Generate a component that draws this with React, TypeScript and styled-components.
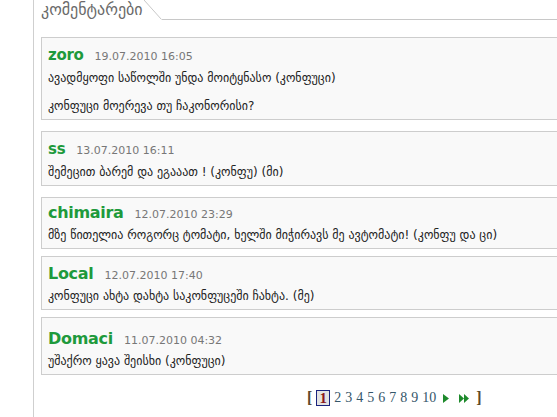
import * as React from 'react'
import styled, {createGlobalStyle} from 'styled-components'

const Global = createGlobalStyle`
  html, body {
    margin: 0;
    padding: 0;
    background: #fff;
    overflow: hidden;
  }
`

const Page = styled.div`
  margin-left: 33px;
  width: 620px;
  min-height: 417px;
  border-left: 1px solid #cfcfcf;
  font-family: Verdana, 'DejaVu Sans', sans-serif;
`

const TabRow = styled.div`
  display: flex;
  align-items: flex-end;
  height: 20px;
`

const TabTitle = styled.h2`
  margin: 0;
  padding: 0 0 0 7px;
  font-family: 'DejaVu Sans', sans-serif;
  font-size: 16px;
  font-weight: normal;
  line-height: 20px;
  color: #6a6a6a;
  height: 20px;
`

const TabCorner = styled.svg`
  display: block;
  width: 18px;
  height: 20px;
  margin-left: 1px;
`

const TabRule = styled.div`
  flex: 1;
  border-bottom: 1px solid #c8c8c8;
`

const List = styled.div`
  padding: 17px 0 0 7px;
`

const Card = styled.div<{$gap: number; $pad: number}>`
  margin-top: ${p => p.$gap}px;
  background: #f9f9f9;
  border: 1px solid #cdcdcd;
  border-right: none;
  padding: ${p => p.$pad}px 7px 5px 6px;
`

const Head = styled.div`
  display: flex;
  align-items: baseline;
  gap: 11px;
  height: 18px;
`

const Author = styled.span<{$size: number}>`
  font-family: Tahoma, 'DejaVu Sans', sans-serif;
  font-weight: bold;
  font-size: ${p => p.$size}px;
  color: #1e9a3c;
  letter-spacing: -0.3px;
`

const Date = styled.span`
  font-family: Verdana, 'DejaVu Sans', sans-serif;
  font-size: 11px;
  color: #777;
`

const Text = styled.p`
  margin: 6px 0 0;
  font-family: 'DejaVu Sans', sans-serif;
  font-size: 12px;
  line-height: 16px;
  color: #222;
  & + & {
    margin-top: 12px;
  }
`

const Pager = styled.div`
  display: flex;
  align-items: center;
  gap: 4px;
  padding: 14px 0 0 273px;
  font-family: 'Liberation Serif', 'Times New Roman', serif;
  font-size: 14px;
  color: #35566a;
`

const Bracket = styled.span`
  color: #5c4a2a;
  font-weight: bold;
  font-size: 16px;
`

const Current = styled.span`
  display: inline-flex;
  align-items: center;
  justify-content: center;
  width: 12px;
  height: 14px;
  border: 1px solid #1a237e;
  background: #e2e2e2;
  color: #8b1a1a;
  font-weight: bold;
  font-size: 15px;
`

const PageLink = styled.span`
  cursor: pointer;
`

const Arrow = styled.svg`
  display: block;
  margin: 0 3px;
`

const comments = [
  {
    author: 'zoro',
    size: 15,
    date: '19.07.2010 16:05',
    gap: 0,
    pad: 8,
    lines: ['ავადმყოფი საწოლში უნდა მოიტყნასო (კონფუცი)', 'კონფუცი მოერევა თუ ჩაკონორისი?'],
  },
  {
    author: 'ss',
    size: 15,
    date: '13.07.2010 16:11',
    gap: 11,
    pad: 8,
    lines: ['შემეცით ბარემ და ეგააათ ! (კონფუ) (მი)'],
  },
  {
    author: 'chimaira',
    size: 16,
    date: '12.07.2010 23:29',
    gap: 11,
    pad: 5,
    lines: ['მზე წითელია როგორც ტომატი, ხელში მიჭირავს მე ავტომატი! (კონფუ და ცი)'],
  },
  {
    author: 'Local',
    size: 16,
    date: '12.07.2010 17:40',
    gap: 7,
    pad: 7,
    lines: ['კონფუცი ახტა დახტა საკონფუცეში ჩახტა. (მე)'],
  },
  {
    author: 'Domaci',
    size: 16,
    date: '11.07.2010 04:32',
    gap: 7,
    pad: 11,
    lines: ['უშაქრო ყავა შეისხი (კონფუცი)'],
  },
]

export default function App() {
  return (
    <>
      <Global />
      <Page>
        <TabRow>
          <TabTitle>კომენტარები</TabTitle>
          <TabCorner viewBox="0 0 18 20">
            <line x1="0" y1="0" x2="17.5" y2="19.5" stroke="#c8c8c8" strokeWidth="1" />
          </TabCorner>
          <TabRule />
        </TabRow>
        <List>
          {comments.map(c => (
            <Card key={c.author} $gap={c.gap} $pad={c.pad}>
              <Head>
                <Author $size={c.size}>{c.author}</Author>
                <Date>{c.date}</Date>
              </Head>
              {c.lines.map(l => (
                <Text key={l}>{l}</Text>
              ))}
            </Card>
          ))}
        </List>
        <Pager>
          <Bracket>[</Bracket>
          <Current>1</Current>
          {[2, 3, 4, 5, 6, 7, 8, 9, 10].map(n => (
            <PageLink key={n}>{n}</PageLink>
          ))}
          <Arrow width="6" height="9" viewBox="0 0 6 9">
            <polygon points="0,0 6,4.5 0,9" fill="#1e8a2c" />
          </Arrow>
          <Arrow width="10" height="9" viewBox="0 0 10 9">
            <polygon points="0,0 5,4.5 0,9" fill="#1e8a2c" />
            <polygon points="5,0 10,4.5 5,9" fill="#1e8a2c" />
          </Arrow>
          <Bracket>]</Bracket>
        </Pager>
      </Page>
    </>
  )
}
